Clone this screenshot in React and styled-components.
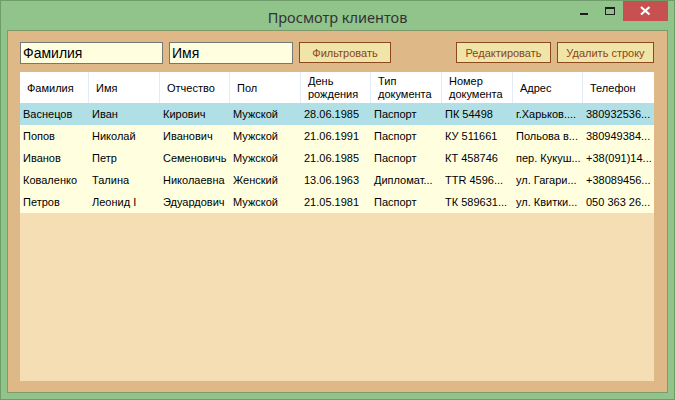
import React from 'react';
import styled, { createGlobalStyle } from 'styled-components';

const GlobalStyle = createGlobalStyle`
	html, body {
		margin: 0;
		padding: 0;
		background: #ffffff;
	}
	* {
		box-sizing: border-box;
	}
`;

const columns = [
	{ title: 'Фамилия', width: 69 },
	{ title: 'Имя', width: 71 },
	{ title: 'Отчество', width: 70 },
	{ title: 'Пол', width: 71 },
	{ title: ['День', 'рождения'], width: 70 },
	{ title: ['Тип', 'документа'], width: 71 },
	{ title: ['Номер', 'документа'], width: 71 },
	{ title: 'Адрес', width: 70 },
	{ title: 'Телефон', width: 71 },
];

const clients = [
	['Васнецов', 'Иван', 'Кирович', 'Мужской', '28.06.1985', 'Паспорт', 'ПК 54498', 'г.Харьков....', '380932536...'],
	['Попов', 'Николай', 'Иванович', 'Мужской', '21.06.1991', 'Паспорт', 'КУ 511661', 'Польова в...', '380949384...'],
	['Иванов', 'Петр', 'Семеновичь', 'Мужской', '21.06.1985', 'Паспорт', 'КТ 458746', 'пер. Кукуш...', '+38(091)14...'],
	['Коваленко', 'Талина', 'Николаевна', 'Женский', '13.06.1963', 'Дипломат...', 'TTR 4596...', 'ул. Гагари...', '+38089456...'],
	['Петров', 'Леонид I', 'Эдуардович', 'Мужской', '21.05.1981', 'Паспорт', 'ТК 589631...', 'ул. Квитки...', '050 363 26...'],
];

const gridTemplate = columns.map(c => `${c.width}px`).join(' ');

function App() {
	return (
		<React.Fragment>
			<GlobalStyle />
			<Window>
				<TitleBar>
					<span />
					<Title>Просмотр клиентов</Title>
					<Controls>
						<CaptionButton>
							<svg width='26' height='20' viewBox='0 0 26 20'>
								<rect x='9' y='12' width='8' height='2' fill='#1e1e1e' />
							</svg>
						</CaptionButton>
						<CaptionButton>
							<svg width='26' height='20' viewBox='0 0 26 20'>
								<rect x='8.5' y='6.5' width='9' height='7' fill='none' stroke='#1e1e1e' strokeWidth='1' />
								<rect x='8' y='6' width='10' height='2' fill='#1e1e1e' />
							</svg>
						</CaptionButton>
						<CloseButton>
							<svg width='45' height='20' viewBox='0 0 45 20'>
								<path d='M18 6 L26.5 13.5 M26.5 6 L18 13.5' stroke='#ffffff' strokeWidth='2.2' />
							</svg>
						</CloseButton>
					</Controls>
				</TitleBar>
				<Client>
					<Toolbar>
						<TextBox width={143} defaultValue='Фамилия' />
						<TextBox width={124} defaultValue='Имя' />
						<ActionButton width={92}>Фильтровать</ActionButton>
						<Spacer />
						<ActionButton width={95}>Редактировать</ActionButton>
						<ActionButton width={97}>Удалить строку</ActionButton>
					</Toolbar>
					<Grid>
						<HeaderRow>
							{columns.map((c, i) => (
								<HeaderCell key={i}>
									{Array.isArray(c.title)
										? c.title.map((line, j) => <div key={j}>{line}</div>)
										: c.title}
								</HeaderCell>
							))}
						</HeaderRow>
						{clients.map((row, i) => (
							<DataRow key={i} selected={i === 0}>
								{row.map((value, j) => (
									<Cell key={j}>{value}</Cell>
								))}
							</DataRow>
						))}
					</Grid>
				</Client>
			</Window>
		</React.Fragment>
	);
}

export default App;

const Window = styled.div`
	width: 675px;
	height: 400px;
	background: #90c48b;
	border: 1px solid #6f9d6a;
	display: flex;
	flex-direction: column;
	font-family: 'Liberation Sans', Arial, sans-serif;
`;

const TitleBar = styled.div`
	height: 29px;
	display: grid;
	grid-template-columns: 1fr auto 1fr;
	align-items: start;
`;

const Title = styled.div`
	font-family: 'Noto Sans', 'Open Sans', sans-serif;
	font-size: 14.5px;
	color: #333333;
	line-height: 29px;
	padding-top: 2px;
`;

const Controls = styled.div`
	display: flex;
	justify-content: flex-end;
	margin-right: 6px;
`;

const CaptionButton = styled.div`
	width: 26px;
	height: 20px;
	display: flex;
`;

const CloseButton = styled.div`
	width: 45px;
	height: 20px;
	background: #c75050;
	display: flex;
`;

const Client = styled.div`
	margin: 0 6px;
	height: 363px;
	border: 1px solid #7e9a6c;
	background: #deb887;
	padding: 11px 13px 11px 12px;
	display: flex;
	flex-direction: column;
	gap: 8px;
`;

const Toolbar = styled.div`
	display: flex;
	align-items: flex-start;
	gap: 6px;
	height: 22px;
`;

const TextBox = styled.input`
	width: ${p => p.width}px;
	height: 22px;
	border: 1px solid #777777;
	background: #ffffe0;
	font-family: 'Liberation Sans', Arial, sans-serif;
	font-size: 14px;
	color: #000000;
	padding: 0 2px;
	outline: none;
`;

const ActionButton = styled.div`
	width: ${p => p.width}px;
	height: 21px;
	border: 1px solid #8b4a1c;
	background: #f0e4a8;
	color: #8b4513;
	font-size: 11px;
	display: flex;
	align-items: center;
	justify-content: center;
	padding-top: 1px;
`;

const Spacer = styled.div`
	flex: 1;
`;

const Grid = styled.div`
	flex: 1;
	background: #f5deb3;
	font-size: 11px;
	color: #000000;
`;

const HeaderRow = styled.div`
	display: grid;
	grid-template-columns: ${gridTemplate};
	height: 31px;
	background: #ffffff;
`;

const HeaderCell = styled.div`
	border-right: 1px solid #e3ebf6;
	padding-left: 7px;
	display: flex;
	flex-direction: column;
	justify-content: center;
	line-height: 13px;
	padding-top: 1px;
	white-space: nowrap;
	&:last-child {
		border-right: none;
	}
`;

const DataRow = styled.div`
	display: grid;
	grid-template-columns: ${gridTemplate};
	height: 22px;
	background: ${p => (p.selected ? '#b0e0e6' : '#ffffe0')};
`;

const Cell = styled.div`
	padding-left: 3px;
	line-height: 22px;
	white-space: nowrap;
	overflow: hidden;
`;
